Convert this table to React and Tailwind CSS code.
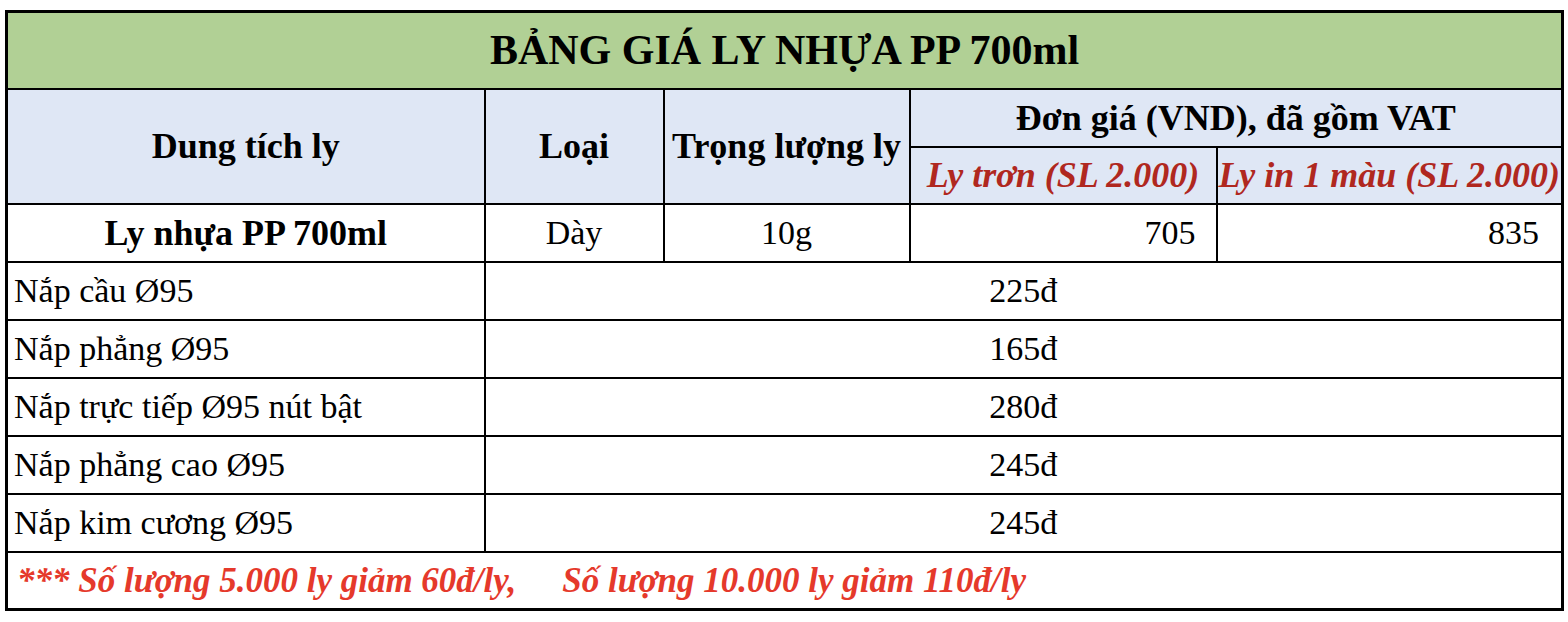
import React from 'react';

const lids = [
  { name: 'Nắp cầu Ø95', price: '225đ' },
  { name: 'Nắp phẳng Ø95', price: '165đ' },
  { name: 'Nắp trực tiếp Ø95 nút bật', price: '280đ' },
  { name: 'Nắp phẳng cao Ø95', price: '245đ' },
  { name: 'Nắp kim cương Ø95', price: '245đ' },
];

const cell = 'border-2 border-black p-0 whitespace-nowrap overflow-hidden';

const App = () => {
  return (
    <div className="min-h-screen bg-white pt-[10px] pl-[5px] font-['Liberation_Serif',serif] text-black">
      <table className="table-fixed border-collapse border-[3px] border-black w-[1556px] text-[34px] leading-none">
        <colgroup>
          <col className="w-[478px]" />
          <col className="w-[179px]" />
          <col className="w-[246px]" />
          <col className="w-[307px]" />
          <col className="w-[346px]" />
        </colgroup>
        <thead>
          <tr className="h-[77px] bg-[#b1d095]">
            <th colSpan={5} className={`${cell} text-[42px] font-bold text-center`}>
              BẢNG GIÁ LY NHỰA PP 700ml
            </th>
          </tr>
          <tr className="h-[58px] bg-[#dfe7f5] text-[36px]">
            <th rowSpan={2} className={`${cell} font-bold text-center`}>Dung tích ly</th>
            <th rowSpan={2} className={`${cell} font-bold text-center`}>Loại</th>
            <th rowSpan={2} className={`${cell} font-bold text-center`}>Trọng lượng ly</th>
            <th colSpan={2} className={`${cell} font-bold text-center`}>Đơn giá (VND), đã gồm VAT</th>
          </tr>
          <tr className="h-[57px] bg-[#dfe7f5] text-[36px]">
            <th className={`${cell} font-bold italic text-center text-[#b0281f]`}>Ly trơn (SL 2.000)</th>
            <th className={`${cell} font-bold italic text-center text-[#b0281f]`}>Ly in 1 màu (SL 2.000)</th>
          </tr>
        </thead>
        <tbody>
          <tr className="h-[58px]">
            <td className={`${cell} text-[36px] font-bold text-center`}>Ly nhựa PP 700ml</td>
            <td className={`${cell} text-center`}>Dày</td>
            <td className={`${cell} text-center`}>10g</td>
            <td className={`${cell} text-right pr-[20px]`}>705</td>
            <td className={`${cell} text-right pr-[22px]`}>835</td>
          </tr>
          {lids.map((lid) => (
            <tr key={lid.name} className="h-[58px]">
              <td className={`${cell} text-left pl-[6px]`}>{lid.name}</td>
              <td colSpan={4} className={`${cell} text-center`}>{lid.price}</td>
            </tr>
          ))}
          <tr className="h-[58px]">
            <td colSpan={5} className={`${cell} text-[35px] text-left pl-[9px] font-bold italic text-[#e5392b]`}>
              <span>*** Số lượng 5.000 ly giảm 60đ/ly,</span>
              <span className="ml-[46px]">Số lượng 10.000 ly giảm 110đ/ly</span>
            </td>
          </tr>
        </tbody>
      </table>
    </div>
  );
};

export default App;
